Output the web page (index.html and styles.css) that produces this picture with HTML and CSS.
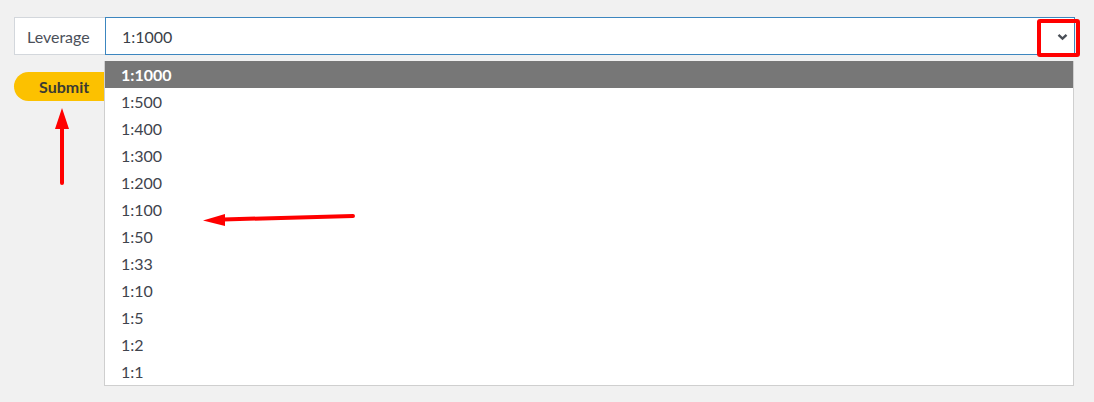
FILE: index.html
```html
<!DOCTYPE html>
<html lang="en">
<head>
<meta charset="utf-8">
<title>Leverage</title>
<link rel="stylesheet" href="styles.css">
</head>
<body>
<div class="page">
  <div class="field">
    <div class="field-label">Leverage</div>
    <div class="select">
      <span class="select-value">1:1000</span>
      <svg class="chevron" width="11" height="8" viewBox="0 0 11 8"><path d="M1.5 1.8 L5.5 5.6 L9.5 1.8" fill="none" stroke="#4a4f57" stroke-width="2.4"/></svg>
    </div>
  </div>
  <div class="actions">
    <button class="submit">Submit</button>
  </div>

  <ul class="dropdown">
    <li class="option selected">1:1000</li>
    <li class="option">1:500</li>
    <li class="option">1:400</li>
    <li class="option">1:300</li>
    <li class="option">1:200</li>
    <li class="option">1:100</li>
    <li class="option">1:50</li>
    <li class="option">1:33</li>
    <li class="option">1:10</li>
    <li class="option">1:5</li>
    <li class="option">1:2</li>
    <li class="option">1:1</li>
  </ul>

  <div class="mark-box"></div>
  <svg class="arrow arrow-up" width="20" height="80" viewBox="0 0 20 80">
    <path d="M10 75 L10 20" stroke="#ff0000" stroke-width="4" stroke-linecap="round"/>
    <polygon points="10,0 3,21 17,21" fill="#ff0000"/>
  </svg>
  <svg class="arrow arrow-left" width="160" height="16" viewBox="0 0 160 16">
    <path d="M150 5 L20 8.5" stroke="#ff0000" stroke-width="4" stroke-linecap="round"/>
    <polygon points="0,9.5 22,3 22,15" fill="#ff0000"/>
  </svg>
</div>
</body>
</html>
```

FILE: styles.css
```css
* { box-sizing: border-box; }
html, body { margin: 0; padding: 0; }
body {
  background: #f1f1f1;
  font-family: Lato, "Open Sans", "Liberation Sans", sans-serif;
  font-size: 16px;
  color: #3d4350;
  width: 1094px;
  height: 402px;
  overflow: hidden;
}
.page {
  position: relative;
  padding: 17px 19px 0 14px;
}
.field {
  display: flex;
  height: 38px;
}
.field-label {
  width: 91px;
  border: 1px solid #d3d7dc;
  border-right: none;
  background: #fff;
  display: flex;
  align-items: center;
  padding-left: 12px;
  color: #4b505a;
}
.select {
  flex: 1;
  border: 1px solid #3c86bf;
  background: #fff;
  display: flex;
  align-items: center;
  justify-content: space-between;
  padding: 0 6px 0 16px;
  color: #3a3f48;
}
.chevron { margin-top: 1px; }
.actions {
  margin-top: 17px;
}
.submit {
  border: none;
  background: #fcc100;
  border-radius: 15px;
  height: 29px;
  width: 110px;
  padding: 0 0 0 25px;
  text-align: left;
  font-family: inherit;
  font-size: 16px;
  font-weight: 700;
  color: #3b3a33;
}
.dropdown {
  position: absolute;
  left: 104px;
  top: 61px;
  width: 970px;
  margin: 0;
  padding: 0;
  list-style: none;
  background: #fff;
  border: 1px solid #cfcfcf;
  border-top: none;
}
.option {
  height: 27px;
  line-height: 27px;
  padding-left: 16px;
  color: #3f444d;
}
.option.selected {
  background: #777777;
  color: #fff;
  font-weight: 700;
}
.mark-box {
  position: absolute;
  left: 1037px;
  top: 19px;
  width: 43px;
  height: 38px;
  border: 4px solid #ff0000;
  border-radius: 3px;
}
.arrow { position: absolute; }
.arrow-up { left: 52px; top: 108px; }
.arrow-left { left: 203px; top: 211px; }
```
